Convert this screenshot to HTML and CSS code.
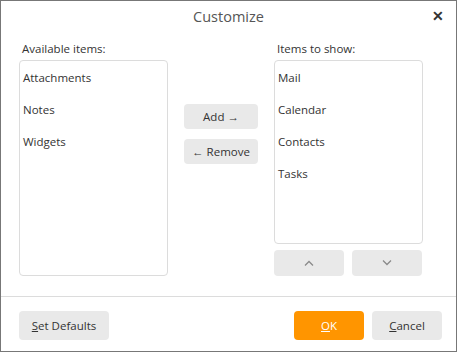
FILE: index.html
```html
<!DOCTYPE html>
<html lang="en">
<head>
    <meta charset="UTF-8">
    <title>Customize</title>
    <link rel="stylesheet" href="styles.css">
</head>
<body>
    <div class="dialog">
        <div class="titlebar">
            <span></span>
            <div class="title">Customize</div>
            <button class="close" title="Close">&#x2715;</button>
        </div>

        <div class="main">
            <div class="column">
                <div class="label">Available items:</div>
                <div class="list list-tall">
                    <div class="item">Attachments</div>
                    <div class="item">Notes</div>
                    <div class="item">Widgets</div>
                </div>
            </div>

            <div class="middle">
                <button class="btn btn-move">Add &rarr;</button>
                <button class="btn btn-move">&larr; Remove</button>
            </div>

            <div class="column">
                <div class="label">Items to show:</div>
                <div class="list list-short">
                    <div class="item">Mail</div>
                    <div class="item">Calendar</div>
                    <div class="item">Contacts</div>
                    <div class="item">Tasks</div>
                </div>
                <div class="order">
                    <button class="btn btn-order" title="Move up">
                        <svg width="10" height="6" viewBox="0 0 10 6"><path d="M1 5.5 L5 1.5 L9 5.5" fill="none" stroke="#8a8a8a" stroke-width="1.3"/></svg>
                    </button>
                    <button class="btn btn-order" title="Move down">
                        <svg width="10" height="6" viewBox="0 0 10 6"><path d="M1 0.5 L5 4.5 L9 0.5" fill="none" stroke="#8a8a8a" stroke-width="1.3"/></svg>
                    </button>
                </div>
            </div>
        </div>

        <div class="footer">
            <button class="btn btn-wide"><u>S</u>et Defaults</button>
            <div class="spacer"></div>
            <button class="btn btn-primary"><u>O</u>K</button>
            <button class="btn"><u>C</u>ancel</button>
        </div>
    </div>
</body>
</html>
```

FILE: styles.css
```css
body {
    margin: 0;
    font-family: "Open Sans", "Noto Sans", sans-serif;
    font-size: 11.5px;
    color: #333;
    background: white;
}
.dialog {
    width: 457px;
    height: 352px;
    box-sizing: border-box;
    border: 1px solid #777;
    display: flex;
    flex-direction: column;
}
.titlebar {
    height: 30px;
    display: grid;
    grid-template-columns: 1fr auto 1fr;
    align-items: center;
}
.title {
    font-size: 14.5px;
    color: #555;
}
.close {
    justify-self: end;
    margin-right: 12px;
    border: none;
    background: none;
    padding: 0;
    font-size: 14px;
    font-weight: bold;
    color: #333;
    cursor: pointer;
}
.main {
    display: flex;
    gap: 16px;
    padding: 10px 0 0 18px;
}
.label {
    height: 16px;
    line-height: 16px;
    margin-bottom: 3px;
    padding-left: 3px;
    color: #333;
}
.list {
    width: 149px;
    box-sizing: border-box;
    border: 1px solid #dcdcdc;
    border-radius: 4px;
    padding: 6px 3px;
}
.list-tall { height: 216px; }
.list-short { height: 184px; }
.item {
    height: 32px;
    line-height: 22px;
}
.middle {
    display: flex;
    flex-direction: column;
    gap: 10px;
    padding-top: 63px;
}
.btn {
    height: 29px;
    width: 70px;
    padding: 0;
    border: none;
    border-radius: 4px;
    background: #e9e9e9;
    color: #333;
    font-family: inherit;
    font-size: 11.5px;
    cursor: pointer;
}
.btn-move {
    width: 74px;
    height: 25px;
}
.order {
    display: flex;
    gap: 8px;
    margin-top: 6px;
}
.btn-order {
    height: 26px;
    display: flex;
    align-items: center;
    justify-content: center;
}
.footer {
    margin-top: auto;
    border-top: 1px solid #dcdcdc;
    height: 55px;
    box-sizing: border-box;
    display: flex;
    align-items: flex-start;
    gap: 8px;
    padding: 14px 14px 0 18px;
}
.spacer { flex: 1; }
.btn-wide { width: 90px; }
.btn-primary {
    background: #ff9500;
    color: white;
}
```
